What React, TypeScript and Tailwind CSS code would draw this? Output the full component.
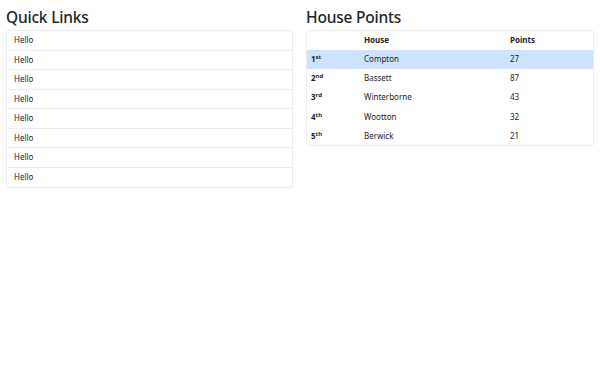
export default function App() {
  const links = Array.from({ length: 8 }, () => 'Hello')
  const houses = [
    { pos: '1', suf: 'st', name: 'Compton', pts: 27 },
    { pos: '2', suf: 'nd', name: 'Bassett', pts: 87 },
    { pos: '3', suf: 'rd', name: 'Winterborne', pts: 43 },
    { pos: '4', suf: 'th', name: 'Wootton', pts: 32 },
    { pos: '5', suf: 'th', name: 'Berwick', pts: 21 },
  ]

  return (
    <div className="w-[600px] h-[384px] bg-white text-[#212529] px-[6px] pt-[6px] flex gap-[13px] font-['Noto_Sans',sans-serif]">
      {/* Quick Links */}
      <div className="w-[287px]">
        <h3 className="text-[15.5px] leading-[22px] font-medium mb-[2px] tracking-[-0.2px]">Quick Links</h3>
        <div className="border border-[#ececec] rounded-[3px]">
          {links.map((l, i) => (
            <div
              key={i}
              className="h-[19.5px] flex items-center px-[7px] text-[8px] border-b border-[#ececec] last:border-b-0"
            >
              {l}
            </div>
          ))}
        </div>
      </div>

      {/* House Points */}
      <div className="w-[288px]">
        <h3 className="text-[15.5px] leading-[22px] font-medium mb-[2px] tracking-[-0.2px]">House Points</h3>
        <div className="border border-[#ececec] rounded-[3px] overflow-hidden">
          <table className="w-full text-[8px] border-collapse">
            <thead>
              <tr className="h-[18.5px] font-bold text-left">
                <th className="w-[57px] pl-[4px]"></th>
                <th className="w-[146px]">House</th>
                <th>Points</th>
              </tr>
            </thead>
            <tbody>
              {houses.map((h, i) => (
                <tr key={h.name} className={`h-[19.2px] ${i === 0 ? 'bg-[#cfe2ff]' : ''}`}>
                  <td className="pl-[4px] font-bold">
                    {h.pos}
                    <sup className="text-[6px]">{h.suf}</sup>
                  </td>
                  <td>{h.name}</td>
                  <td>{h.pts}</td>
                </tr>
              ))}
            </tbody>
          </table>
        </div>
      </div>
    </div>
  )
}
